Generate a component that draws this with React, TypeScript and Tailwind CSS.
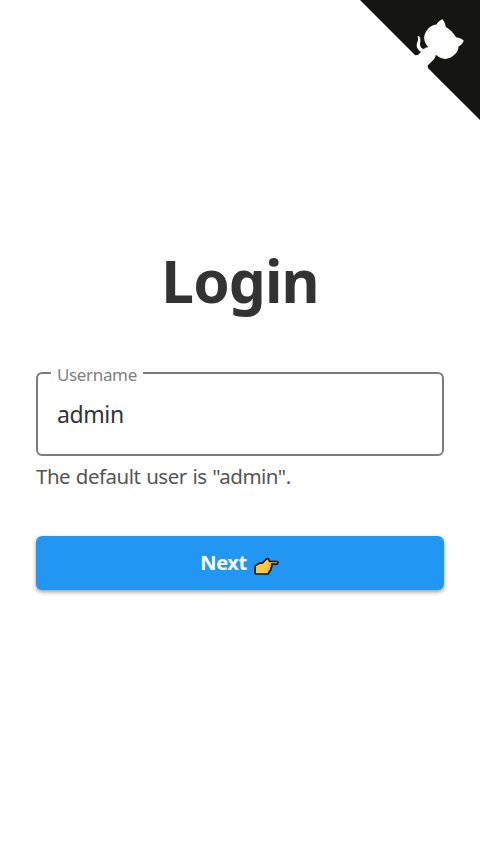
function GithubCorner() {
  return (
    <svg className="absolute right-0 top-0 size-[120px]" viewBox="0 0 250 250" aria-hidden="true">
      <path fill="#151513" d="M0,0 L115,115 L130,115 L142,142 L250,250 L250,0 Z" />
      <path
        fill="#fff"
        d="M128.3,109.0 C113.8,99.7 119.0,89.6 119.0,89.6 C122.0,82.7 120.5,78.6 120.5,78.6 C119.2,72.0 123.4,76.3 123.4,76.3 C127.3,80.9 125.5,87.3 125.5,87.3 C122.9,97.6 130.6,101.9 134.4,103.2"
      />
      <path
        fill="#fff"
        d="M115.0,115.0 C114.9,115.1 118.7,116.5 119.8,115.4 L133.7,101.6 C136.9,99.2 139.9,98.4 142.2,98.6 C133.8,88.0 127.5,74.4 143.8,58.0 C148.5,53.4 154.0,51.2 159.7,51.0 C160.3,49.4 163.2,43.6 171.4,40.1 C171.4,40.1 176.1,42.5 178.8,56.2 C183.1,58.6 187.2,61.8 190.9,65.4 C194.5,69.0 197.7,73.2 200.1,77.6 C213.8,80.2 216.3,84.9 216.3,84.9 C212.7,93.1 206.9,96.0 205.4,96.6 C205.1,102.4 203.0,107.8 198.3,112.5 C181.9,128.9 168.3,122.5 157.7,114.1 C157.9,116.9 156.7,120.9 152.7,124.9 L141.0,136.5 C139.8,137.7 141.6,141.9 141.8,141.8 Z"
      />
    </svg>
  );
}

function PointingHand() {
  return (
    <svg className="mt-[6px] h-[19px] w-[26px]" viewBox="0 0 26 19" aria-hidden="true">
      <path
        d="M2 8.2 L5 6.4 L8.7 5.8 L12.3 2.1 Q13.6 1 14.7 2.2 L15.5 4.5 H23 Q25 5.8 23 7.2 H17.7 L18 9.3 L17 11 L16.8 13.3 L15.4 14.3 L14.3 17 H2 Q1.1 17 1.1 16 V9.2 Z"
        fill="#ffc83d"
        stroke="#151515"
        strokeWidth="1.7"
        strokeLinejoin="round"
      />
      <path d="M14.5 7.8 H17 M14.2 11 H16.3 M13.3 14 H15" fill="none" stroke="#d67d00" strokeWidth=".8" />
    </svg>
  );
}

export default function App() {
  return (
    <main className="relative flex h-[852px] w-full flex-col bg-white px-9 font-['Noto_Sans','Open_Sans',sans-serif]">
      <GithubCorner />
      <h1 className="mt-[240px] text-center text-[58.5px] font-bold leading-[80px] tracking-[-0.9px] text-[#333]">Login</h1>
      <fieldset className="mt-[42px] h-[94px] rounded-[6px] border-2 border-[#7c7c7c] pl-[13px]">
        <legend className="h-[22px] px-[6px] text-[17px] leading-[25px] tracking-[-0.35px] text-[#808080]">Username</legend>
        <input
          className="mt-[12px] h-[36px] w-full bg-transparent pl-[6px] text-[23px] tracking-[-0.4px] text-[#333] outline-none"
          defaultValue="admin"
          aria-label="Username"
        />
      </fieldset>
      <p className="mt-[5px] text-[20.5px] leading-[30px] tracking-[-0.5px] text-[#555] [word-spacing:0.9px]">
        The default user is "admin".
      </p>
      <button className="mt-[45px] flex h-[54px] w-full items-center justify-center gap-[7px] rounded-[6px] bg-[#2196f3] text-[20px] font-bold text-white shadow-[0_2px_4px_rgba(0,0,0,0.4)]">
        <span className="tracking-[-0.4px]">Next</span>
        <PointingHand />
      </button>
    </main>
  );
}
